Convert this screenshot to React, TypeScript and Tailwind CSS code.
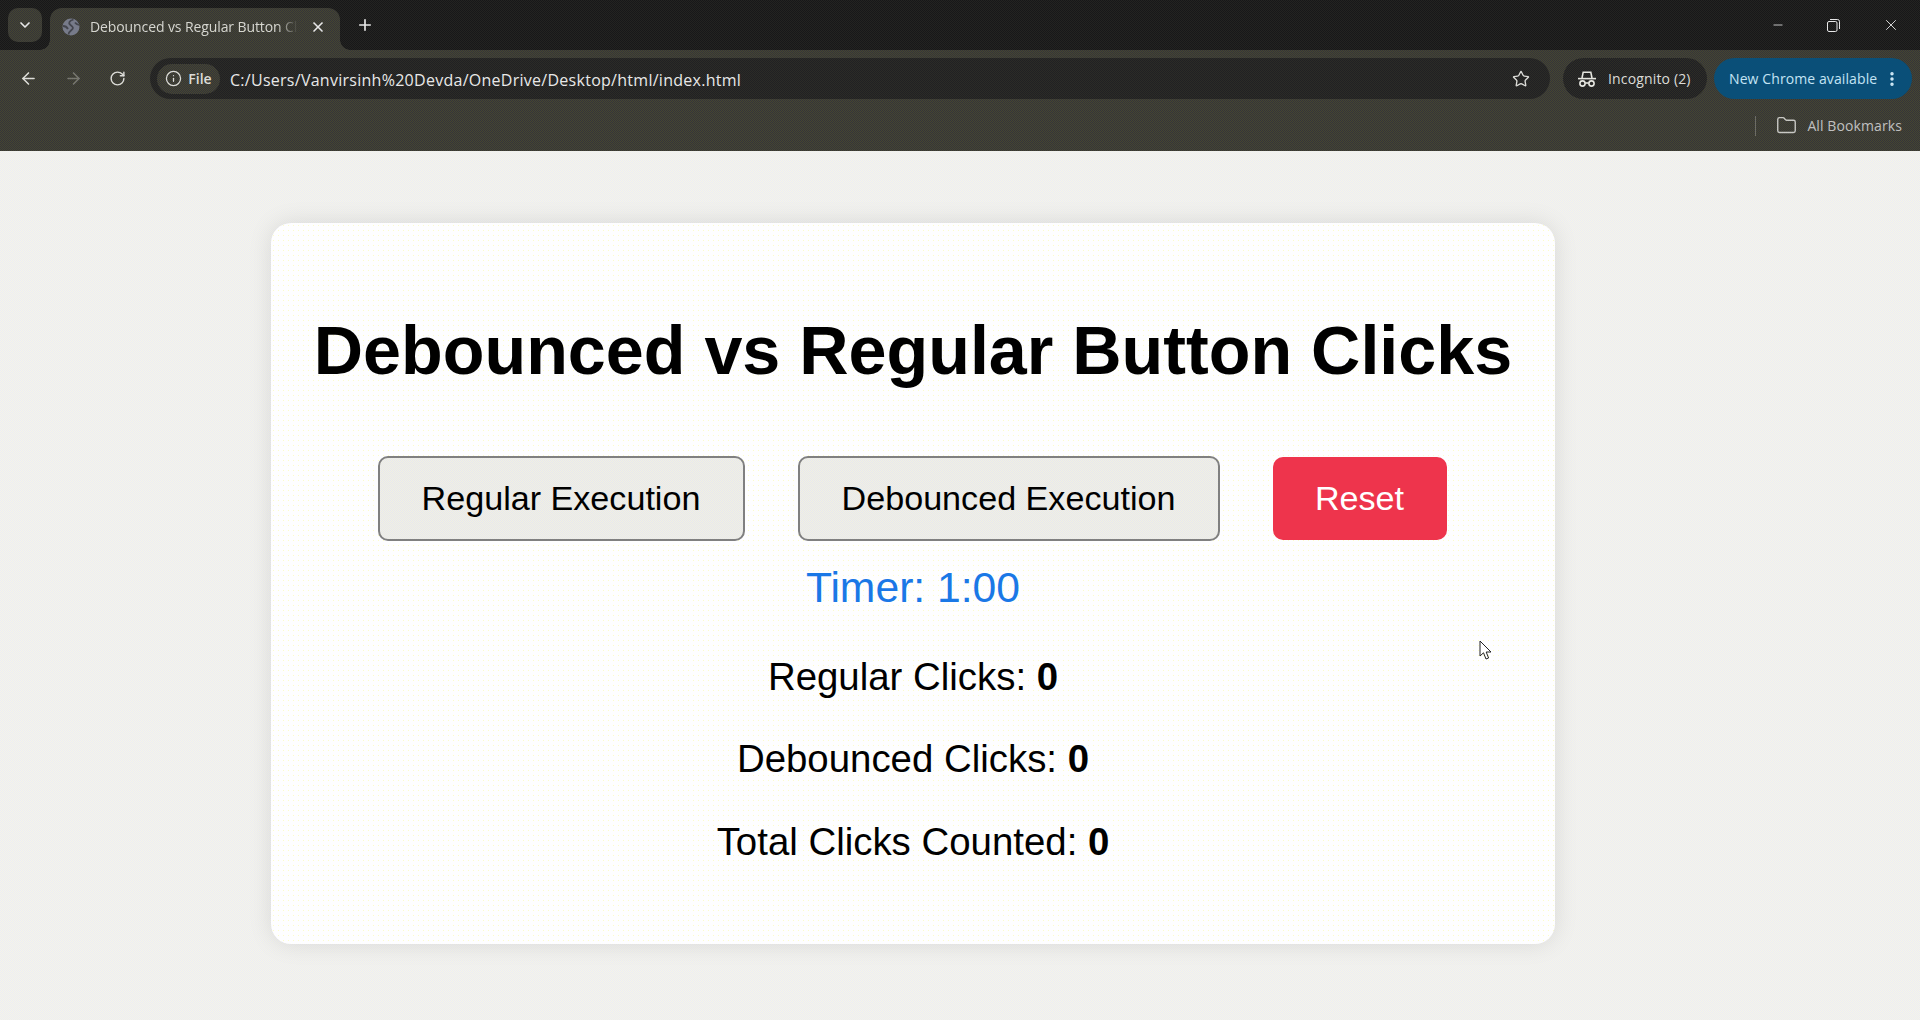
import { ArrowLeft, ArrowRight, ChevronDown, Folder, Info, Minus, MoreVertical, Plus, RotateCw, Star, X } from "lucide-react";

const toolbarBg = "bg-[repeating-conic-gradient(#464630_0_25%,#34343a_0_50%)] bg-[length:2px_2px]";
const darkBg = "bg-[repeating-conic-gradient(#242420_0_25%,#17171a_0_50%)] bg-[length:2px_2px]";
const pillBg = "bg-[repeating-conic-gradient(#2c2c26_0_25%,#202024_0_50%)] bg-[length:2px_2px]";
const buttonBg = "bg-[repeating-conic-gradient(#f2f2e0_0_25%,#e6e6f0_0_50%)] bg-[length:2px_2px]";

function IncognitoIcon() {
  return (
    <svg width="20" height="18" viewBox="0 0 20 18" fill="none" stroke="#e6e6e0" strokeWidth="1.6">
      <path d="M5 8 L6.2 2.2 H13.8 L15 8" />
      <path d="M1 8.6 H19" />
      <circle cx="5.5" cy="13.5" r="2.6" />
      <circle cx="14.5" cy="13.5" r="2.6" />
      <path d="M8.2 13 H11.8" />
    </svg>
  );
}

function RestoreIcon() {
  return (
    <svg width="13" height="13" viewBox="0 0 13 13" fill="none" stroke="#e8e8e8" strokeWidth="1">
      <rect x="0.5" y="2.5" width="9.5" height="10" rx="1.5" />
      <path d="M3 .5 H10.5 A2 2 0 0 1 12.5 2.5 V10" />
    </svg>
  );
}

function Favicon() {
  return (
    <svg width="18" height="18" viewBox="0 0 18 18" className="shrink-0">
      <circle cx="9" cy="9" r="8.5" fill="#777b8a" />
      <path d="M11.5 1.5 C7 3 6 5 8.5 7 C11 9 12 10 9.5 12 C8 13.2 6.5 14.5 6.5 16.5 M1 8 C3 8 5 9 6 11 M17 7 C15 6.5 14 6 13 4.5" fill="none" stroke="#44464e" strokeWidth="1.8" />
    </svg>
  );
}

function ChromeBar() {
  return (
    <header className="w-full font-['Open_Sans','Noto_Sans',sans-serif]">
      <div className={`h-[50px] flex items-end ${darkBg}`}>
        <div className="flex h-[50px] items-center pl-[8px]">
          <div className={`w-[34px] h-[34px] rounded-[10px] flex items-center justify-center ${toolbarBg}`}>
            <ChevronDown size={16} strokeWidth={2.5} color="#e8e8e8" />
          </div>
        </div>
        <div className={`relative ml-[8px] w-[290px] h-[42px] rounded-t-[12px] flex items-center pl-[12px] pr-[14px] pb-[4px] ${toolbarBg}`}>
          <Favicon />
          <span className="ml-[10px] w-[208px] text-[14px] leading-[20px] tracking-[-0.1px] text-[#d6d6d0] whitespace-nowrap overflow-hidden [mask-image:linear-gradient(to_right,black_90%,transparent)]">
            Debounced vs Regular Button Clicks
          </span>
          <X size={16} strokeWidth={2.5} color="#e8e8e8" className="ml-auto shrink-0" />
          <div className="absolute left-[-10px] bottom-0 w-[10px] h-[10px] bg-[radial-gradient(circle_at_0_0,transparent_9.5px,#3d3d35_10px)]" />
          <div className="absolute right-[-10px] bottom-0 w-[10px] h-[10px] bg-[radial-gradient(circle_at_100%_0,transparent_9.5px,#3d3d35_10px)]" />
        </div>
        <div className="h-[50px] ml-[16px] flex items-center">
          <Plus size={18} strokeWidth={2.2} color="#e8e8e8" />
        </div>
        <div className="ml-auto h-[50px] flex items-center pr-[20px] gap-[42px]">
          <Minus size={14} strokeWidth={1.4} color="#e8e8e8" />
          <RestoreIcon />
          <X size={18} strokeWidth={1.2} color="#e8e8e8" />
        </div>
      </div>

      <div className={`h-[54px] pt-[3px] flex items-center ${toolbarBg}`}>
        <div className="flex items-center pl-[19px] gap-[26px]">
          <ArrowLeft size={19} strokeWidth={2} color="#dcdcd8" />
          <ArrowRight size={19} strokeWidth={2} color="#77776f" />
          <RotateCw size={17} strokeWidth={2} color="#dcdcd8" />
        </div>
        <div className={`ml-[24px] h-[41px] w-[1400px] rounded-full flex items-center pl-[7px] pr-[20px] ${pillBg}`}>
          <div className={`h-[30px] w-[63px] rounded-full flex items-center justify-center gap-[6px] ${toolbarBg}`}>
            <Info size={17} strokeWidth={1.8} color="#dcdcd8" />
            <span className="text-[14px] font-semibold text-[#dcdcd8]">File</span>
          </div>
          <span className="ml-[10px] pt-[2px] text-[16px] tracking-[0.27px] text-[#e8e8e8] whitespace-nowrap">
            C:/Users/Vanvirsinh%20Devda/OneDrive/Desktop/html/index.html
          </span>
          <Star size={18} strokeWidth={1.8} color="#dcdcd8" className="ml-auto" />
        </div>
        <div className={`ml-[13px] h-[41px] w-[144px] rounded-full flex items-center pl-[14px] gap-[11px] ${pillBg}`}>
          <IncognitoIcon />
          <span className="text-[14px] tracking-[0.15px] text-[#dcdcd8] whitespace-nowrap">Incognito (2)</span>
        </div>
        <div className="ml-[7px] h-[41px] w-[198px] rounded-full flex items-center pl-[15px] bg-[#0a4f78]">
          <span className="text-[14px] tracking-[0.1px] text-[#c4e4f4] whitespace-nowrap">New Chrome available</span>
          <MoreVertical size={18} strokeWidth={2.6} color="#d4ecf8" className="ml-[6px]" />
        </div>
      </div>

      <div className={`h-[47px] pb-[4px] flex items-center justify-end pr-[18px] ${toolbarBg}`}>
        <div className="w-px h-[20px] bg-[#6c6c66] mr-[20px]" />
        <Folder size={21} strokeWidth={1.6} color="#c8c8c4" />
        <span className="ml-[10px] text-[14px] tracking-[0.1px] text-[#c0c0c0] whitespace-nowrap">All Bookmarks</span>
      </div>
    </header>
  );
}

function Stat({ label, className }: { label: string; className: string }) {
  return (
    <p className={`text-[38.4px] leading-[44px] text-black text-center ${className}`}>
      {label}: <strong className="font-bold">0</strong>
    </p>
  );
}

export default function App() {
  return (
    <div className="relative w-full h-[1020px] overflow-hidden bg-[repeating-conic-gradient(#f6f6e6_0_25%,#ebebf6_0_50%)] bg-[length:2px_2px] font-['Liberation_Sans',Arial,sans-serif]">
      <ChromeBar />
      <main className="ml-[271px] mt-[72px] w-[1284px] h-[721px] rounded-[20px] bg-[#fefeff] bg-[radial-gradient(#fcfcc8_0.6px,transparent_0.7px)] bg-[length:5px_5px] shadow-[0_0_24px_rgba(0,0,0,0.10)] flex flex-col items-center">
        <h1 className="mt-[88px] text-[68.27px] leading-[78px] font-bold text-black whitespace-nowrap">
          Debounced vs Regular Button Clicks
        </h1>
        <div className="mt-[67px] pr-[2px] flex items-center gap-[53px]">
          <button className={`w-[367px] h-[85px] rounded-[10px] border-2 border-[#808080] text-[34.13px] text-black ${buttonBg}`}>
            Regular Execution
          </button>
          <button className={`w-[422px] h-[85px] rounded-[10px] border-2 border-[#808080] text-[34.13px] text-black ${buttonBg}`}>
            Debounced Execution
          </button>
          <button className="w-[174px] h-[83px] rounded-[10px] bg-[#ee344c] text-[34.13px] text-white">
            Reset
          </button>
        </div>
        <div className="mt-[22px] text-[42.67px] leading-[48px] text-[#1a78e6]">Timer: 1:00</div>
        <Stat label="Regular Clicks" className="mt-[44px]" />
        <Stat label="Debounced Clicks" className="mt-[38px]" />
        <Stat label="Total Clicks Counted" className="mt-[39px]" />
      </main>
      <svg className="absolute left-[1479px] top-[640px]" width="14" height="21" viewBox="0 0 14 21" fill="#fff" stroke="#222" strokeWidth="1">
        <path d="M1 1 V16 L4.5 12.8 L7 19 L9.6 18 L7.2 12 H12 Z" />
      </svg>
    </div>
  );
}
